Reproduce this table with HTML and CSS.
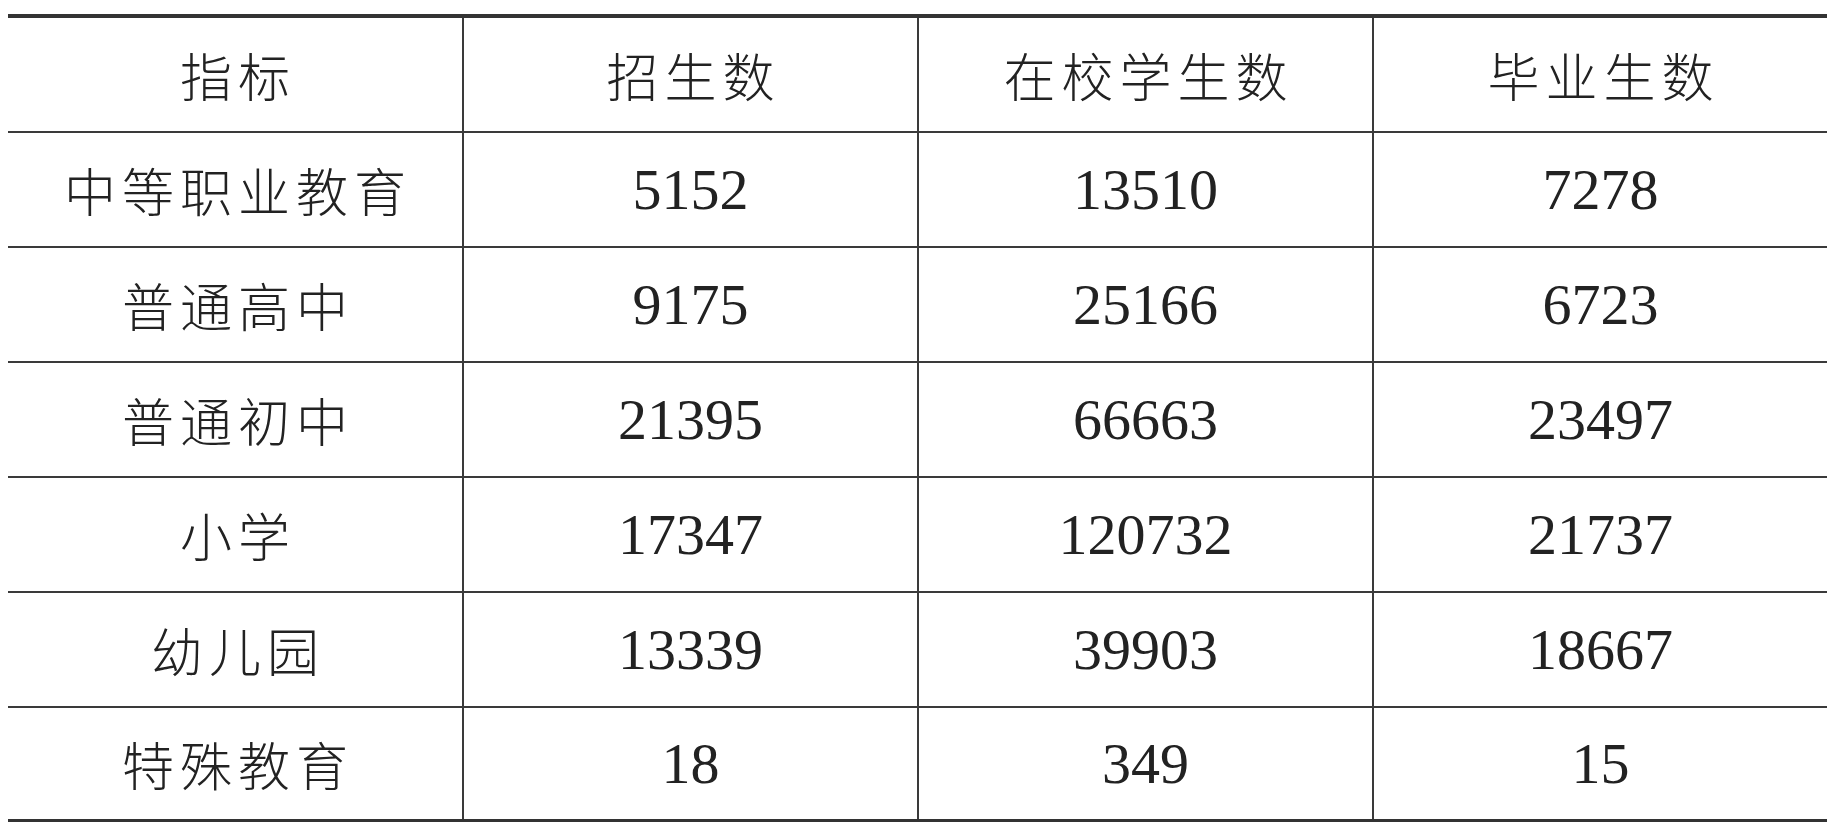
FILE: index.html
```html
<!DOCTYPE html>
<html lang="zh-CN">
<head>
<meta charset="utf-8">
<title>教育统计</title>
<link rel="stylesheet" href="styles.css">
</head>
<body>
<table class="stats">
  <colgroup>
    <col class="c1"><col class="c2"><col class="c3"><col class="c4">
  </colgroup>
  <thead>
    <tr class="row head">
      <th class="cell zh">指标</th>
      <th class="cell zh">招生数</th>
      <th class="cell zh">在校学生数</th>
      <th class="cell zh last">毕业生数</th>
    </tr>
  </thead>
  <tbody>
    <tr class="row">
      <td class="cell zh">中等职业教育</td>
      <td class="cell num">5152</td>
      <td class="cell num">13510</td>
      <td class="cell num last">7278</td>
    </tr>
    <tr class="row">
      <td class="cell zh">普通高中</td>
      <td class="cell num">9175</td>
      <td class="cell num">25166</td>
      <td class="cell num last">6723</td>
    </tr>
    <tr class="row">
      <td class="cell zh">普通初中</td>
      <td class="cell num">21395</td>
      <td class="cell num">66663</td>
      <td class="cell num last">23497</td>
    </tr>
    <tr class="row">
      <td class="cell zh">小学</td>
      <td class="cell num">17347</td>
      <td class="cell num">120732</td>
      <td class="cell num last">21737</td>
    </tr>
    <tr class="row">
      <td class="cell zh">幼儿园</td>
      <td class="cell num">13339</td>
      <td class="cell num">39903</td>
      <td class="cell num last">18667</td>
    </tr>
    <tr class="row final">
      <td class="cell zh">特殊教育</td>
      <td class="cell num">18</td>
      <td class="cell num">349</td>
      <td class="cell num last">15</td>
    </tr>
  </tbody>
</table>
</body>
</html>
```
FILE: styles.css
```css
html, body {
  background: #ffffff;
}
body {
  margin: 14px 1px 0 8px;
  color: #222222;
  font-family: "Liberation Serif", "Noto Sans CJK SC", serif;
}
.stats {
  width: 1819px;
  table-layout: fixed;
  border-collapse: separate;
  border-spacing: 0;
  border-top: 4px solid #333333;
  border-bottom: 4px solid #333333;
}
.c1 { width: 456px; }
.c2 { width: 455px; }
.c3 { width: 455px; }
.c4 { width: 453px; }
.row {
  height: 115px;
}
.row.final {
  height: 111px;
}
.cell {
  padding: 0;
  text-align: center;
  vertical-align: middle;
  border-right: 2px solid #3a3a3a;
  border-bottom: 2px solid #3a3a3a;
  white-space: nowrap;
}
.cell.last {
  border-right: none;
}
.final .cell {
  border-bottom: none;
}
.zh {
  font-family: "Noto Sans CJK SC", sans-serif;
  font-weight: 300;
  font-size: 52px;
  letter-spacing: 6px;
  text-indent: 6px;
  line-height: 1;
}
.num {
  font-family: "Liberation Serif", serif;
  font-weight: 400;
  font-size: 58px;
  letter-spacing: 0;
  line-height: 1;
}
```
